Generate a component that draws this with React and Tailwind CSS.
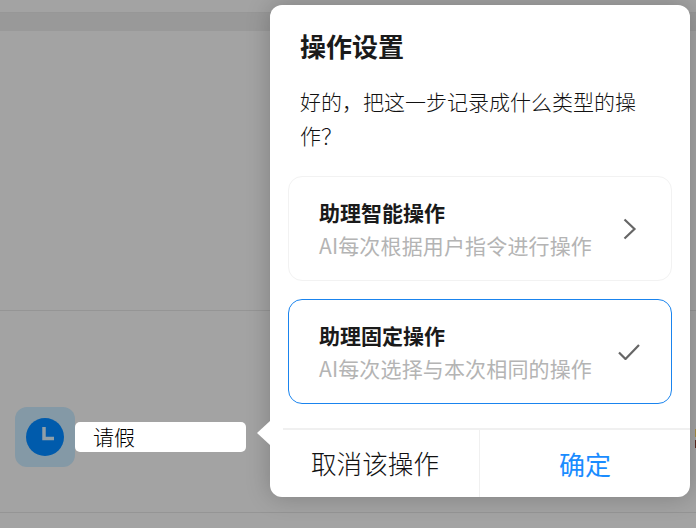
import React from "react";

const cjk = "font-['Noto_Sans_CJK_SC','Noto_Sans',sans-serif]";

function OptionCard({ title, desc, active, children }) {
  return (
    <div
      className={
        "flex h-[105px] items-center justify-between rounded-[14px] border pl-[30px] pr-[32px] " +
        (active ? "border-[#1a84ee]" : "border-[#f2f2f2]")
      }
    >
      <div>
        <div className="text-[21px] leading-[33px] font-semibold text-[#1a1a1a]">{title}</div>
        <div className="text-[21px] leading-[33px] tracking-[0.15px] text-[#b4b4b4]">{desc}</div>
      </div>
      {children}
    </div>
  );
}

export default function App() {
  return (
    <div className={"relative h-[528px] w-[696px] overflow-hidden bg-[#a3a3a3] " + cjk}>
      {/* dimmed page behind the popup */}
      <div className="h-3" />
      <div className="h-[19px] border-t border-[#979797] bg-[#999999]" />
      <div className="h-[279px]" />
      <div className="h-px bg-[#959595]" />
      <div className="flex h-[201px] items-center pl-[15px] pt-[50px]">
        <div className="flex h-[60px] w-[60px] items-center justify-center rounded-[12px] bg-[#8499a6]">
          <svg width="38" height="38" viewBox="0 0 38 38">
            <circle cx="19" cy="19" r="19" fill="#005bac" />
            <path d="M18 9v11.5h10" fill="none" stroke="#8f9fa8" strokeWidth="3.5" />
          </svg>
        </div>
        <div className="flex h-[30px] w-[171px] items-center rounded-[5px] bg-white pl-[18px] text-[21px] font-light text-black">
          请假
        </div>
      </div>
      <div className="h-px bg-[#959595]" />

      {/* cut off text at the window edge */}
      <div className="absolute right-0 top-[429px] flex w-px flex-col gap-[3px]">
        <div className="h-2 bg-[#a58a45]" />
        <div className="h-2 bg-[#5a2a20]" />
      </div>

      {/* popup */}
      <div className="absolute left-[270px] top-[5px] flex h-[492px] w-[420px] flex-col rounded-[12px] bg-white shadow-[0_0_24px_rgba(0,0,0,0.22)]">
        <div className="absolute -left-[13px] top-[416px] h-0 w-0 border-y-[12px] border-r-[13px] border-y-transparent border-r-white" />
        <div className="pl-[30px] pr-[30px] pt-[22px]">
          <h1 className="text-[26px] leading-[38px] font-bold text-[#1a1a1a]">操作设置</h1>
          <p className="mt-[19px] text-[21px] leading-[34px] font-light text-[#111111]">
            好的，把这一步记录成什么类型的操作？
          </p>
        </div>
        <div className="mt-[24px] flex flex-col gap-[18px] pl-[18px] pr-[18px]">
          <OptionCard title="助理智能操作" desc="AI每次根据用户指令进行操作">
            <svg width="16" height="22" viewBox="0 0 16 22" fill="none" stroke="#666666" strokeWidth="2.2" className="mr-px">
              <path d="M2.5 1.5 12.5 11 2.5 20.5" />
            </svg>
          </OptionCard>
          <OptionCard title="助理固定操作" desc="AI每次选择与本次相同的操作" active>
            <svg width="22" height="16" viewBox="0 0 22 16" fill="none" stroke="#666666" strokeWidth="2.2" className="-mr-px">
              <path d="M1 8.5 7.5 15 21 1" />
            </svg>
          </OptionCard>
        </div>
        <div className="mt-auto ml-[13px] flex h-[69px] border-t-2 border-[#f0f0f0]">
          <button className="w-[197px] border-r border-[#f0f0f0] pr-[12px] text-[25.6px] font-light text-[#111111]">取消该操作</button>
          <button className="flex-1 text-[26px] font-normal text-[#1a8cff]">确定</button>
        </div>
      </div>
    </div>
  );
}
